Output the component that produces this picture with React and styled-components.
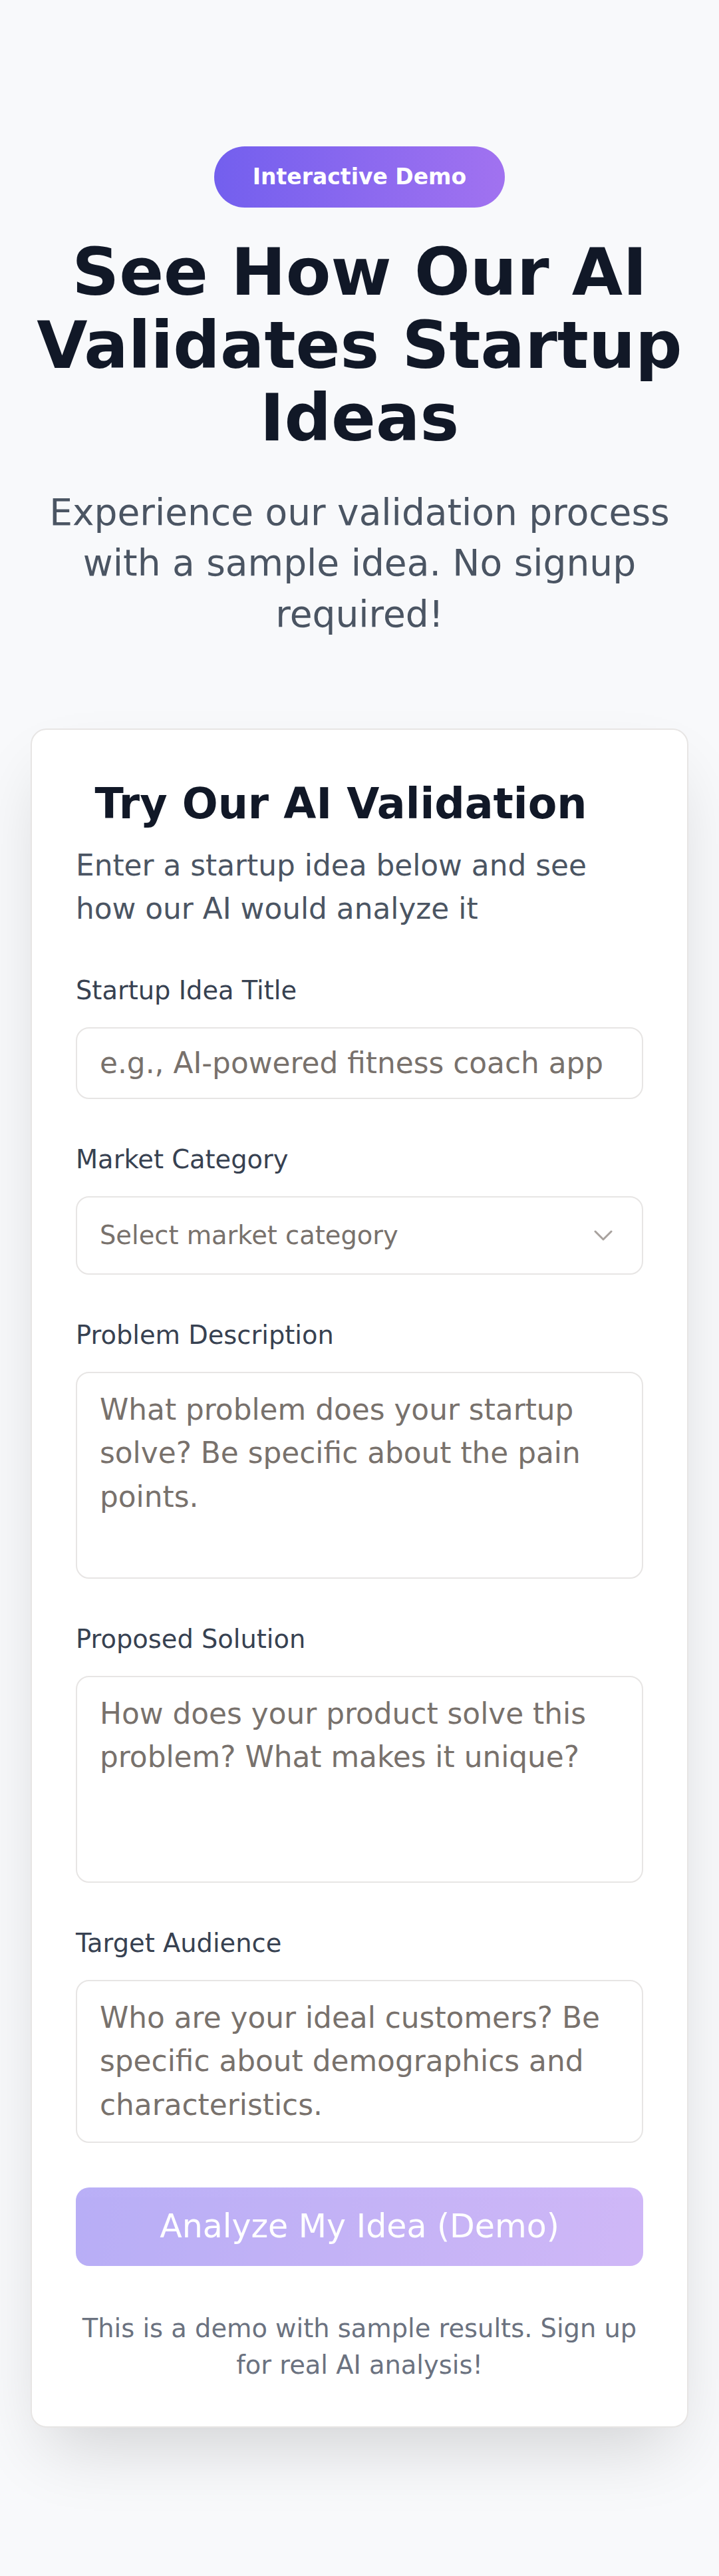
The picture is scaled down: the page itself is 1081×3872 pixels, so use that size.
import React from 'react';
import styled, { createGlobalStyle } from 'styled-components';

const GlobalStyle = createGlobalStyle`
  html, body {
    margin: 0;
    padding: 0;
    background: #f8f9fb;
  }
  body {
    font-family: "DejaVu Sans", "Noto Sans", sans-serif;
    color: #111827;
  }
  * { box-sizing: border-box; }
`;

const Page = styled.main`
  padding: 220px 40px 225px;
`;

const Hero = styled.section`
  display: flex;
  flex-direction: column;
  align-items: center;
  text-align: center;
`;

const Badge = styled.span`
  display: inline-block;
  height: 92px;
  line-height: 92px;
  padding: 0 58px;
  border-radius: 999px;
  background: linear-gradient(90deg, #735fee, #a172f0);
  color: #fff;
  font-size: 33px;
  font-weight: 700;
`;

const Heading = styled.h1`
  margin: 42px 0 0;
  font-size: 98.6px;
  line-height: 109.6px;
  font-weight: 700;
  color: #111827;
`;

const Subtitle = styled.p`
  margin: 49px 0 0;
  font-size: 55px;
  line-height: 76.7px;
  color: #4b5563;
`;

const Card = styled.section`
  margin: 133px 6px 0;
  background: #fff;
  border: 2px solid #e7e5e4;
  border-radius: 24px;
  padding: 68px 66px 64px;
  box-shadow: 0 50px 100px -25px rgba(0, 0, 0, 0.16);
`;

const CardTitle = styled.h2`
  margin: 0;
  padding-right: 56px;
  text-align: center;
  font-size: 63.5px;
  line-height: 87.7px;
  font-weight: 700;
  color: #111827;
`;

const CardText = styled.p`
  margin: 15px 0 0;
  font-size: 43.8px;
  line-height: 65.8px;
  color: #4b5563;
`;

const Form = styled.form`
  display: flex;
  flex-direction: column;
  gap: 64px;
  margin-top: 63px;
`;

const Field = styled.div`
  display: flex;
  flex-direction: column;
`;

const Label = styled.label`
  font-size: 38.4px;
  line-height: 54.8px;
  color: #374151;
  margin-bottom: 27px;
`;

const controlBase = `
  width: 100%;
  border: 2px solid #e7e5e4;
  border-radius: 20px;
  background: #fff;
  font-family: "DejaVu Sans", "Noto Sans", sans-serif;
  color: #111827;
  outline: none;
  &::placeholder { color: #78716c; opacity: 1; }
`;

const Input = styled.input`
  ${controlBase}
  height: 108px;
  padding: 0 34px;
  font-size: 43.8px;
`;

const SelectBox = styled.div`
  ${controlBase}
  height: 118px;
  padding: 0 44px 0 34px;
  display: flex;
  align-items: center;
  justify-content: space-between;
  font-size: 38.4px;
  color: #78716c;
`;

const TextArea = styled.textarea`
  ${controlBase}
  display: block;
  height: ${({ $rows }) => $rows * 65.8 + 48}px;
  padding: 22px 34px;
  font-size: 43.8px;
  line-height: 65.8px;
  resize: none;
  overflow: hidden;
`;

const SubmitButton = styled.button`
  height: 118px;
  margin-top: 3px;
  border: none;
  border-radius: 20px;
  background: linear-gradient(100deg, #735fee, #a172f0);
  opacity: 0.5;
  color: #fff;
  font-family: "DejaVu Sans", "Noto Sans", sans-serif;
  font-size: 49px;
  cursor: not-allowed;
`;

const Note = styled.p`
  margin: 3px 0 0;
  text-align: center;
  font-size: 38.4px;
  line-height: 54.8px;
  color: #6b7280;
`;

const Chevron = () => (
  <svg width="28" height="16" viewBox="0 0 28 16" fill="none">
    <path d="M2 2l12 12L26 2" stroke="#a8a29e" strokeWidth="3" strokeLinecap="round" strokeLinejoin="round" />
  </svg>
);

const fields = [
  {
    label: 'Problem Description',
    placeholder: 'What problem does your startup solve? Be specific about the pain points.',
    rows: 4,
  },
  {
    label: 'Proposed Solution',
    placeholder: 'How does your product solve this problem? What makes it unique?',
    rows: 4,
  },
  {
    label: 'Target Audience',
    placeholder: 'Who are your ideal customers? Be specific about demographics and characteristics.',
    rows: 3,
  },
];

export default function App() {
  return (
    <Page>
      <GlobalStyle />
      <Hero>
        <Badge>Interactive Demo</Badge>
        <Heading>See How Our AI Validates Startup Ideas</Heading>
        <Subtitle>Experience our validation process with a sample idea. No signup required!</Subtitle>
      </Hero>

      <Card>
        <CardTitle>Try Our AI Validation</CardTitle>
        <CardText>Enter a startup idea below and see how our AI would analyze it</CardText>

        <Form onSubmit={(e) => e.preventDefault()}>
          <Field>
            <Label>Startup Idea Title</Label>
            <Input placeholder="e.g., AI-powered fitness coach app" />
          </Field>

          <Field>
            <Label>Market Category</Label>
            <SelectBox>
              <span>Select market category</span>
              <Chevron />
            </SelectBox>
          </Field>

          {fields.map((f) => (
            <Field key={f.label}>
              <Label>{f.label}</Label>
              <TextArea $rows={f.rows} placeholder={f.placeholder} />
            </Field>
          ))}

          <SubmitButton type="submit" disabled>Analyze My Idea (Demo)</SubmitButton>
          <Note>This is a demo with sample results. Sign up for real AI analysis!</Note>
        </Form>
      </Card>
    </Page>
  );
}
